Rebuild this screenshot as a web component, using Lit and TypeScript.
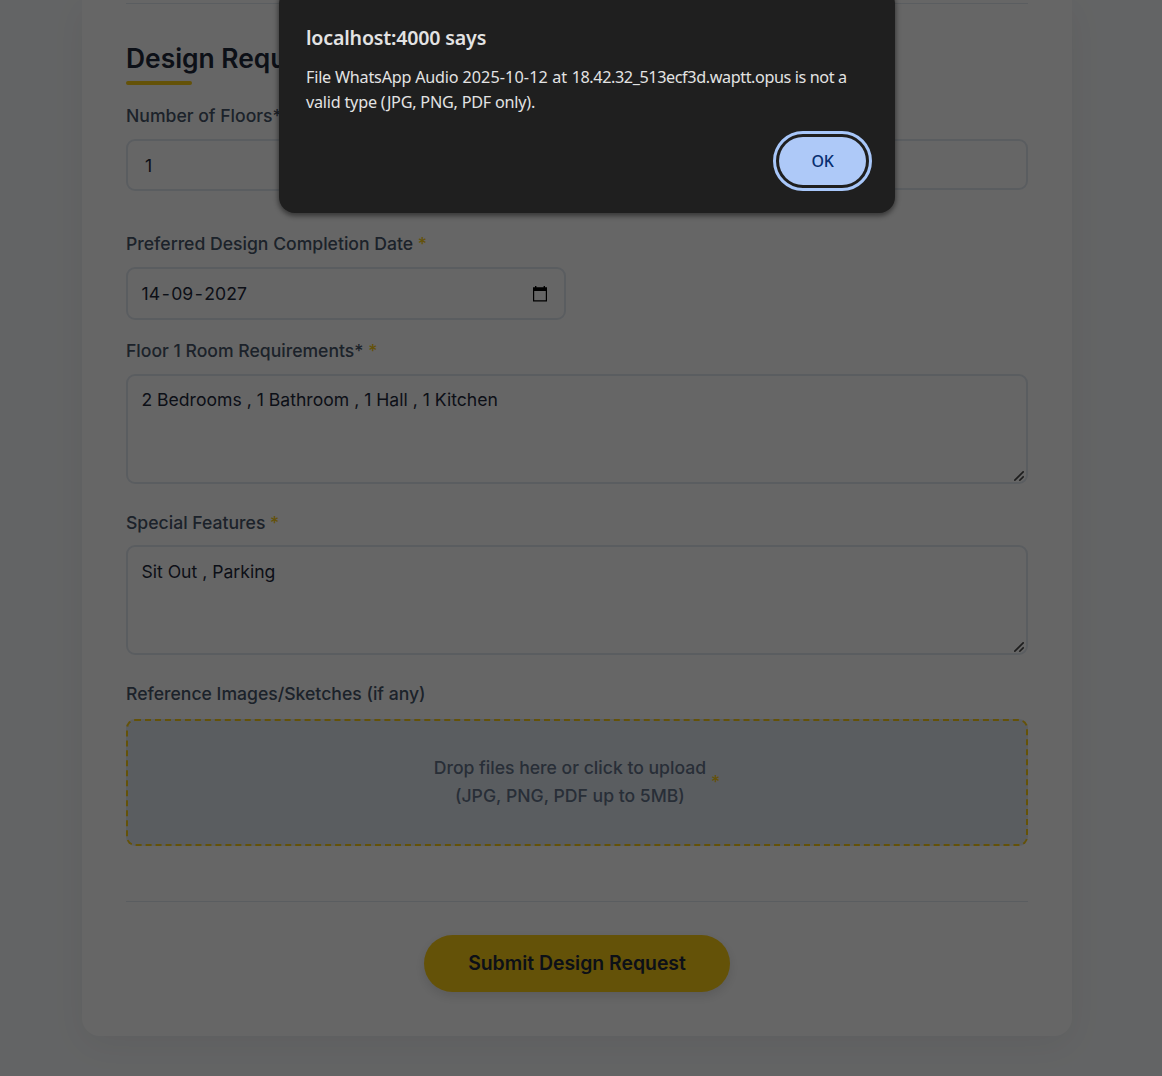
import { LitElement, html, css } from "lit";
import { customElement, property } from "lit/decorators.js";

@customElement("resize-grip")
class ResizeGrip extends LitElement {
  static styles = css`
    :host { display: block; width: 10px; height: 10px; }
    svg { display: block; }
  `;
  render() {
    return html`<svg width="10" height="10" viewBox="0 0 10 10" fill="none" stroke="#4a4a4a" stroke-width="1.6">
      <path d="M0.3 9.7L9.7 0.3M5.3 9.7L9.7 5.3" />
    </svg>`;
  }
}

@customElement("form-field")
class FormField extends LitElement {
  @property() label = "";
  @property() value = "";
  @property() kind: "text" | "short" | "date" | "area" = "text";
  @property({ type: Boolean }) required = false;

  static styles = css`
    :host { display: block; }
    .label { height: 28px; line-height: 28px; font-weight: 500; color: #475569; margin-bottom: var(--label-gap, 9px); white-space: nowrap; }
    .star { color: #facc15; }
    .box { box-sizing: border-box; border: 2px solid #e2e8f0; border-radius: 9px; background: #fff; color: #1e293b; display: flex; padding: 0 13.4px; white-space: pre; }
    .text { height: 52px; align-items: center; padding: 0 17px; }
    .short { height: 51px; }
    .date { height: 53px; align-items: center; justify-content: space-between; padding: 0 16px 0 13.6px; }
    .dash { padding: 0 1.5px; }
    .area { height: 110px; justify-content: space-between; padding-top: var(--area-pad, 10px); line-height: 28px; padding-right: 2px; }
    resize-grip { align-self: flex-end; margin-bottom: 1px; }
  `;

  render() {
    const value =
      this.kind === "date"
        ? this.value.split("-").map((part, i) => (i ? html`<span class="dash">-</span>${part}` : part))
        : this.value;
    return html`
      <div class="label">${this.label}${this.required ? html`<span class="star"> *</span>` : ""}</div>
      <div class="box ${this.kind}">
        <span>${value}</span>
        ${this.kind === "date"
          ? html`<svg width="16" height="17" viewBox="0 0 16 17"><path fill="#000" d="M3 1h1.4v1.2h7.2V1H13v1.2h2V16.4H1V2.2h2zM2.2 6v9.2h11.6V6z" fill-rule="evenodd" /></svg>`
          : ""}
        ${this.kind === "area" ? html`<resize-grip></resize-grip>` : ""}
      </div>
    `;
  }
}

@customElement("alert-dialog")
class AlertDialog extends LitElement {
  static styles = css`
    :host { display: block; box-sizing: border-box; width: 615.5px; height: 225px; padding: 36px 22.5px 22px 27px; background: #1f1f1f; border-radius: 16px; color: #e3e3e3; font-family: "Segoe UI", "Noto Sans", sans-serif; box-shadow: 0 2px 5px 1px rgba(0, 0, 0, 0.45); }
    .column { display: flex; flex-direction: column; height: 100%; }
    .title { font-size: 19.6px; font-weight: 600; line-height: 28px; letter-spacing: -0.18px; white-space: nowrap; }
    .message { margin-top: 13px; font-size: 16.2px; line-height: 25px; letter-spacing: -0.22px; white-space: nowrap; }
    .stamp { letter-spacing: 0.1px; }
    .tail { letter-spacing: -0.4px; }
    .ok { align-self: flex-end; margin-top: 16px; box-sizing: border-box; width: 99px; height: 60px; padding: 3px; border: 3px solid #a8c7fa; border-radius: 30px; background: #1f1f1f; display: flex; }
    .face { flex: 1; border-radius: 26px; background: #aec9f8; color: #062e6f; font-size: 16px; font-weight: 500; letter-spacing: -0.3px; display: flex; align-items: center; justify-content: center; }
  `;
  render() {
    return html`<div class="column">
      <div class="title">localhost:4000 says</div>
      <div class="message">File WhatsApp Audio <span class="stamp">2025-10-12 at </span><span class="tail">18.42.32_513ecf3d.waptt.opus is not a</span><br />valid type (JPG, PNG, PDF only).</div>
      <div class="ok"><div class="face">OK</div></div>
    </div>`;
  }
}

@customElement("app-root")
class AppRoot extends LitElement {
  static styles = css`
    :host { display: block; position: relative; width: 1162px; height: 1076px; overflow: hidden; background: #f8fafc; font-family: Inter, sans-serif; font-size: 17.6px; }
    .card { box-sizing: border-box; width: 990px; height: 1036px; margin-left: 82px; padding: 3px 44px 0; background: #fff; border-radius: 0 0 18px 18px; box-shadow: 0 9px 35px rgba(0, 0, 0, 0.06); display: flex; flex-direction: column; }
    .rule { flex: none; height: 1px; background: #e2e8f0; }
    .heading { margin-top: 37px; height: 40px; line-height: 34px; font-size: 26.4px; font-weight: 600; color: #1e293b; }
    .accent { width: 66px; height: 4px; border-radius: 2px; background: #facc15; }
    .fields { margin-top: 17px; display: grid; grid-template-columns: 440px 440px; column-gap: 22px; }
    .second { margin-top: 39px; }
    .third { margin-top: 17px; }
    .fourth { margin-top: 25px; --label-gap: 8px; --area-pad: 11px; }
    .upload-label { margin-top: 25px; height: 28px; line-height: 28px; font-weight: 500; color: #475569; }
    .upload { margin-top: 11px; box-sizing: border-box; height: 127px; padding-bottom: 2px; border: 2px dashed #facc15; border-radius: 9px; background: #e2e8f0; display: flex; align-items: center; justify-content: center; gap: 5px; color: #64748b; font-weight: 500; line-height: 28px; text-align: center; }
    .star { color: #facc15; }
    .last { margin-top: 55px; }
    .submit { align-self: center; margin-top: 33px; box-sizing: border-box; padding-bottom: 2px; width: 306px; height: 57px; border-radius: 29px; background: #facc15; color: #1e293b; font-size: 19.4px; font-weight: 600; display: flex; align-items: center; justify-content: center; box-shadow: 0 4px 11px rgba(0, 0, 0, 0.12); }
    .scrim { position: absolute; inset: 0; background: rgba(0, 0, 0, 0.6); }
    .dialog { position: absolute; left: 279px; top: -12px; }
  `;

  render() {
    return html`
      <div class="card">
        <div class="rule"></div>
        <div class="heading">Design Requirements</div>
        <div class="accent"></div>
        <div class="fields">
          <form-field label="Number of Floors*" value="1"></form-field>
          <form-field kind="short"></form-field>
        </div>
        <div class="fields second">
          <form-field kind="date" label="Preferred Design Completion Date" value="14-09-2027" required></form-field>
        </div>
        <form-field class="third" kind="area" label="Floor 1 Room Requirements*" value="2 Bedrooms , 1 Bathroom , 1 Hall , 1 Kitchen" required></form-field>
        <form-field class="fourth" kind="area" label="Special Features" value="Sit Out , Parking" required></form-field>
        <div class="upload-label">Reference Images/Sketches (if any)</div>
        <div class="upload">
          <div>Drop files here or click to upload<br />(JPG, PNG, PDF up to 5MB)</div>
          <span class="star">*</span>
        </div>
        <div class="rule last"></div>
        <div class="submit">Submit Design Request</div>
      </div>
      <div class="scrim"></div>
      <alert-dialog class="dialog"></alert-dialog>
    `;
  }
}
